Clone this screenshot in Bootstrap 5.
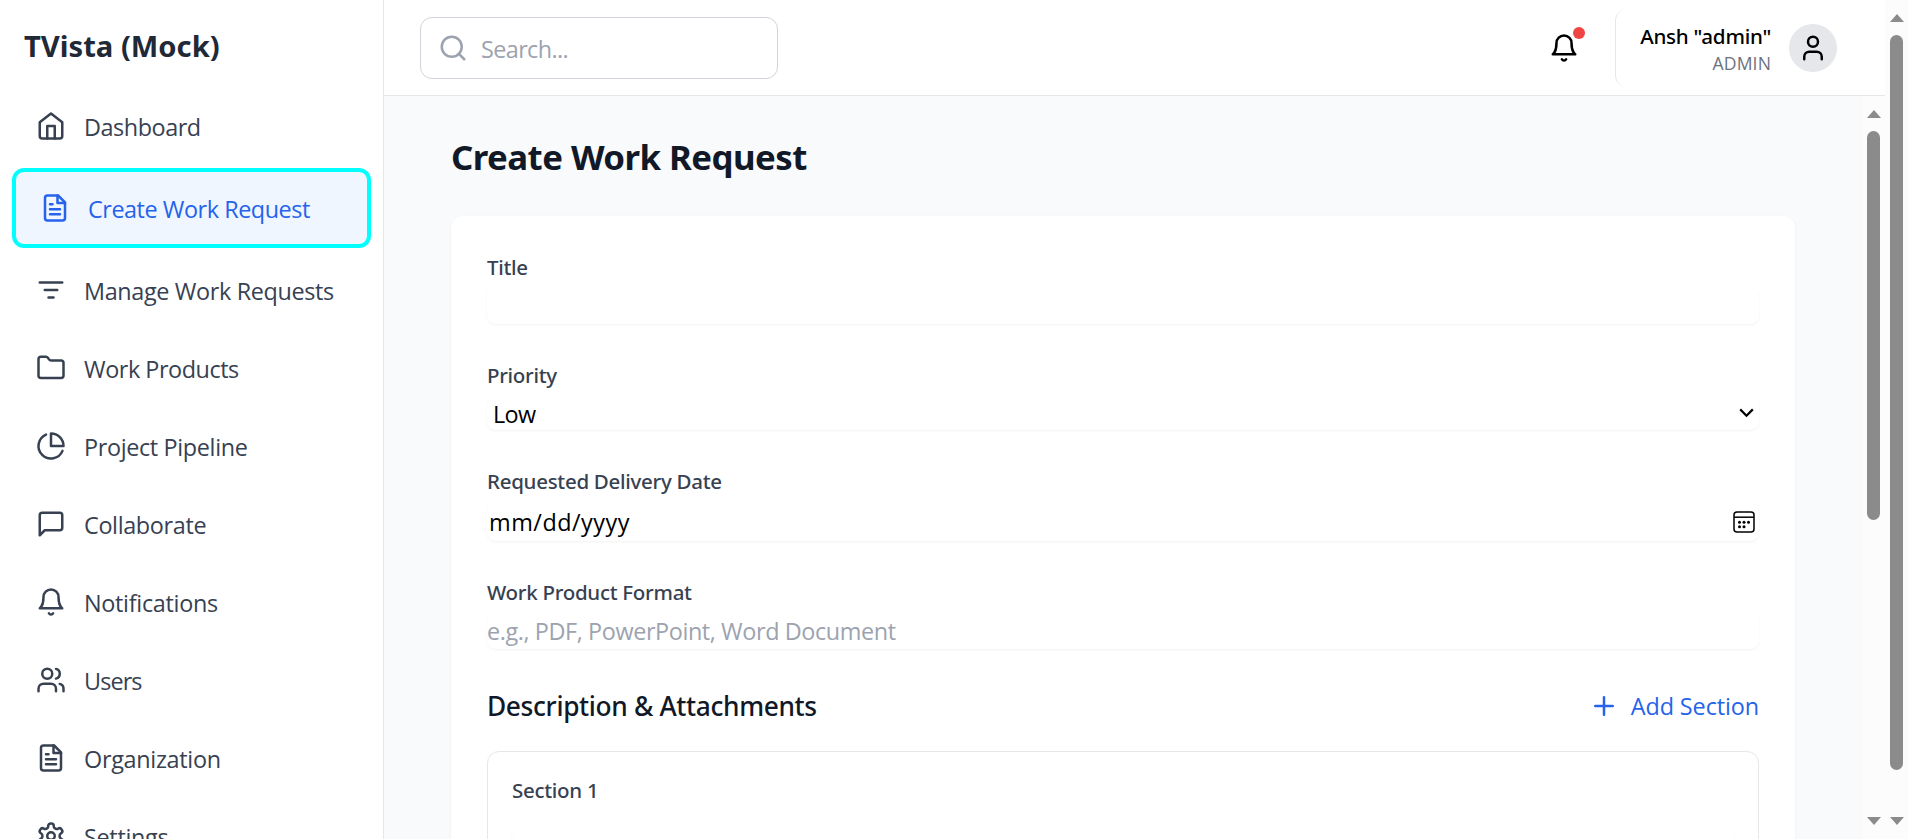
<!DOCTYPE html>
<html lang="en">
<head>
<meta charset="utf-8">
<meta name="viewport" content="width=device-width, initial-scale=1">
<title>TVista (Mock) - Create Work Request</title>
<link href="https://cdn.jsdelivr.net/npm/bootstrap@5.3.0/dist/css/bootstrap.min.css" rel="stylesheet">
<style>
  :root { --line: #e5e7eb; --ink: #111827; --slate: #374151; --muted: #9ca3af; --blue: #2563eb; }
  body { font: 400 23.4px/36px "Open Sans", "Noto Sans", sans-serif; color: #000; letter-spacing: -.35px; }
  .ico { width: 30px; height: 30px; flex: none; fill: none; stroke: currentColor; stroke-width: 2; stroke-linecap: round; stroke-linejoin: round; }
  .t2 { letter-spacing: -.3px; }
  .t4 { letter-spacing: -.45px; }
  .t5 { letter-spacing: -.6px; }
  .t8 { letter-spacing: -.9px; }

  .sidebar { width: 384px; border-right: 1px solid var(--line); }
  .brand { font: 700 29.2px/42px "Noto Sans", sans-serif; letter-spacing: 0; color: #1f2937; padding: 25px 24px 23px; }
  .side-nav { gap: 6px; padding: 0 12px; flex-wrap: nowrap; }
  .side-nav .nav-link { display: flex; align-items: center; gap: 18px; height: 72px; padding: 0 24px; border-radius: 12px; color: var(--slate); flex: none; white-space: nowrap; }
  .side-nav .nav-link span { padding-top: 1px; }
  .side-nav .nav-link.active { height: 80px; border: 4px solid #0ff; background: #eff6ff; color: var(--blue); }

  .topbar { height: 96px; border-bottom: 1px solid var(--line); padding: 0 48px 0 36px; }
  .search-box { width: 358px; height: 62px; border: 1px solid #d1d5db; border-radius: 12px; padding: 0 17px; gap: 13px; color: var(--muted); }
  .search-box span { padding-top: 2px; }
  .bell-dot { position: absolute; width: 12px; height: 12px; top: -6px; right: -6px; background: #ef4444; }
  .profile { height: 78px; border-left: 1px solid var(--line); border-radius: 12px; padding-left: 24px; margin-left: 36px; gap: 18px; }
  .profile-name { font: 500 20.6px/30px "Noto Sans", sans-serif; letter-spacing: -.25px; padding-top: 1px; }
  .profile-role { font-size: 17.6px; line-height: 24px; letter-spacing: .1px; color: #6b7280; }
  .avatar { width: 48px; height: 48px; background: var(--line); }

  .workspace { background: #f9fafb; padding: 34px 67px 0; }
  .page-title { font: 700 34.8px/54px "Noto Sans", sans-serif; letter-spacing: -.55px; color: var(--ink); margin-bottom: 32px; }
  .form-panel { background: #fff; border-radius: 12px 12px 0 0; padding: 36px; height: 700px; box-shadow: 0 1px 3px rgba(0,0,0,.06); }
  .field { margin-bottom: 36px; }
  .field-name { display: block; font: 500 20.5px/30px "Noto Sans", sans-serif; letter-spacing: -.28px; color: var(--slate); margin-bottom: 6px; }
  .plain-input { display: flex; align-items: center; justify-content: space-between; width: 100%; height: 36px; border: 0; border-radius: 9px; box-shadow: 0 1px 3px rgba(0,0,0,.055); padding: 0; background: #fff; outline: 0; letter-spacing: -.4px; color: #000; }
  .plain-input::placeholder { color: var(--muted); opacity: 1; }
  .select-h { height: 34px; padding: 0 5px 0 6px; letter-spacing: -.6px; }
  .select-h span { padding-top: 1px; }
  .date-h { height: 39px; padding: 0 4px 0 2px; letter-spacing: .5px; }
  .section-title { font: 500 26.3px/42px "Noto Sans", sans-serif; letter-spacing: -.35px; color: var(--ink); }
  .add-link { color: var(--blue); gap: 12px; letter-spacing: -.1px; text-decoration: none; }
  .section-box { border: 1px solid var(--line); border-radius: 12px; padding: 23px 24px; height: 200px; margin-top: 24px; }

  .scroller { width: 23px; background: #fcfcfc; padding: 14px 0; }
  .arrow-up, .arrow-down { width: 0; height: 0; border: 7.5px solid transparent; }
  .arrow-up { border-top: 0; border-bottom: 8px solid #8b8b8b; }
  .arrow-down { border-bottom: 0; border-top: 8px solid #8b8b8b; }
  .thumb { width: 13px; border-radius: 7px; background: #8b8b8b; margin-top: 13px; }
  .thumb-page { height: 735px; }
  .thumb-form { height: 389px; }
</style>
</head>
<body class="d-flex vh-100 overflow-hidden bg-white">

<aside class="sidebar d-flex flex-column flex-shrink-0 overflow-hidden">
  <div class="brand">TVista (Mock)</div>
  <nav class="side-nav nav flex-column">
    <a class="nav-link t4" href="#"><svg class="ico" viewBox="0 0 24 24"><path d="M3 9l9-7 9 7v11a2 2 0 0 1-2 2H5a2 2 0 0 1-2-2z"/><path d="M9 22V12h6v10"/></svg><span>Dashboard</span></a>
    <a class="nav-link t4 active" href="#"><svg class="ico" viewBox="0 0 24 24"><path d="M14.500 2H6a2 2 0 0 0-2 2v16a2 2 0 0 0 2 2h12a2 2 0 0 0 2-2V7.500z"/><path d="M14 2v6h6M16 13H8M16 17H8M10 9H8"/></svg><span>Create Work Request</span></a>
    <a class="nav-link" href="#"><svg class="ico" viewBox="0 0 24 24"><path d="M3 6h18M7 12h10M10 18h4"/></svg><span>Manage Work Requests</span></a>
    <a class="nav-link t4" href="#"><svg class="ico" viewBox="0 0 24 24"><path d="M4 20h16a2 2 0 0 0 2-2V8a2 2 0 0 0-2-2h-7.930a2 2 0 0 1-1.660-.9l-.82-1.200A2 2 0 0 0 7.930 3H4a2 2 0 0 0-2 2v13c0 1.100.9 2 2 2Z"/></svg><span>Work Products</span></a>
    <a class="nav-link" href="#"><svg class="ico" viewBox="0 0 24 24"><path d="M21.210 15.890A10 10 0 1 1 8 2.830"/><path d="M22 12A10 10 0 0 0 12 2v10z"/></svg><span>Project Pipeline</span></a>
    <a class="nav-link" href="#"><svg class="ico" viewBox="0 0 24 24"><path d="M21 15a2 2 0 0 1-2 2H7l-4 4V5a2 2 0 0 1 2-2h14a2 2 0 0 1 2 2z"/></svg><span>Collaborate</span></a>
    <a class="nav-link t2" href="#"><svg class="ico" viewBox="0 0 24 24"><path d="M6 8a6 6 0 0 1 12 0c0 7 3 9 3 9H3s3-2 3-9"/><path d="M10.300 21a1.940 1.940 0 0 0 3.400 0"/></svg><span>Notifications</span></a>
    <a class="nav-link t8" href="#"><svg class="ico" viewBox="0 0 24 24"><path d="M16 21v-2a4 4 0 0 0-4-4H6a4 4 0 0 0-4 4v2"/><circle cx="9" cy="7" r="4"/><path d="M22 21v-2a4 4 0 0 0-3-3.870M16 3.130a4 4 0 0 1 0 7.750"/></svg><span>Users</span></a>
    <a class="nav-link t2" href="#"><svg class="ico" viewBox="0 0 24 24"><path d="M14.500 2H6a2 2 0 0 0-2 2v16a2 2 0 0 0 2 2h12a2 2 0 0 0 2-2V7.500z"/><path d="M14 2v6h6M16 13H8M16 17H8M10 9H8"/></svg><span>Organization</span></a>
    <a class="nav-link t2" href="#"><svg class="ico" viewBox="0 0 24 24"><path d="M12.220 2h-.44a2 2 0 0 0-2 2v.18a2 2 0 0 1-1 1.730l-.43.25a2 2 0 0 1-2 0l-.15-.08a2 2 0 0 0-2.730.73l-.22.38a2 2 0 0 0 .73 2.730l.15.1a2 2 0 0 1 1 1.720v.51a2 2 0 0 1-1 1.740l-.15.09a2 2 0 0 0-.73 2.730l.22.38a2 2 0 0 0 2.730.73l.15-.08a2 2 0 0 1 2 0l.43.25a2 2 0 0 1 1 1.730V20a2 2 0 0 0 2 2h.44a2 2 0 0 0 2-2v-.18a2 2 0 0 1 1-1.730l.43-.25a2 2 0 0 1 2 0l.15.08a2 2 0 0 0 2.730-.73l.22-.39a2 2 0 0 0-.73-2.730l-.15-.08a2 2 0 0 1-1-1.740v-.5a2 2 0 0 1 1-1.740l.15-.09a2 2 0 0 0 .73-2.730l-.22-.38a2 2 0 0 0-2.730-.73l-.15.08a2 2 0 0 1-2 0l-.43-.25a2 2 0 0 1-1-1.730V4a2 2 0 0 0-2-2z"/><circle cx="12" cy="12" r="3"/></svg><span>Settings</span></a>
  </nav>
</aside>

<div class="d-flex flex-column flex-grow-1">
  <header class="topbar d-flex align-items-center justify-content-between flex-shrink-0">
    <div class="search-box d-flex align-items-center t5">
      <svg class="ico" viewBox="0 0 24 24"><circle cx="11" cy="11" r="8"/><path d="m21 21-4.300-4.300"/></svg>
      <span>Search...</span>
    </div>
    <div class="d-flex align-items-center">
      <div class="position-relative d-flex">
        <svg class="ico" viewBox="0 0 24 24"><path d="M6 8a6 6 0 0 1 12 0c0 7 3 9 3 9H3s3-2 3-9"/><path d="M10.300 21a1.940 1.940 0 0 0 3.400 0"/></svg>
        <span class="bell-dot rounded-circle"></span>
      </div>
      <div class="profile d-flex align-items-center">
        <div class="text-end">
          <div class="profile-name">Ansh "admin"</div>
          <div class="profile-role">ADMIN</div>
        </div>
        <div class="avatar rounded-circle d-flex align-items-center justify-content-center">
          <svg class="ico" viewBox="0 0 24 24"><path d="M19 21v-2a4 4 0 0 0-4-4H9a4 4 0 0 0-4 4v2"/><circle cx="12" cy="7" r="4"/></svg>
        </div>
      </div>
    </div>
  </header>

  <div class="d-flex flex-grow-1 overflow-hidden">
    <main class="workspace flex-grow-1 overflow-hidden">
      <h1 class="page-title">Create Work Request</h1>
      <form class="form-panel">
        <div class="field">
          <label class="field-name" for="title">Title</label>
          <input class="plain-input" id="title" type="text">
        </div>
        <div class="field">
          <span class="field-name">Priority</span>
          <div class="plain-input select-h" role="combobox"><span>Low</span>
            <svg width="15" height="10" viewBox="0 0 15 10" fill="none" stroke="#000" stroke-width="2.200"><path d="M1.200 1.400 7.500 7.700l6.300-6.300"/></svg>
          </div>
        </div>
        <div class="field">
          <span class="field-name">Requested Delivery Date</span>
          <div class="plain-input date-h"><span>mm/dd/yyyy</span>
            <svg width="22" height="22" viewBox="0 0 22 22"><rect x="1" y="1" width="20" height="20" rx="3" fill="none" stroke="#000" stroke-width="1.500"/><path d="M1 6.200h20" stroke="#000" stroke-width="1.500"/><g><circle cx="6.500" cy="11.300" r="1.500"/><circle cx="11" cy="11.300" r="1.500"/><circle cx="15.500" cy="11.300" r="1.500"/><circle cx="6.500" cy="15.700" r="1.500"/><circle cx="11" cy="15.700" r="1.500"/></g></svg>
          </div>
        </div>
        <div class="field">
          <label class="field-name" for="format">Work Product Format</label>
          <input class="plain-input" id="format" type="text" placeholder="e.g., PDF, PowerPoint, Word Document">
        </div>
        <div class="d-flex align-items-center justify-content-between">
          <div class="section-title">Description &amp; Attachments</div>
          <a class="add-link d-flex align-items-center" href="#"><svg class="ico" viewBox="0 0 24 24"><path d="M5 12h14M12 5v14"/></svg><span>Add Section</span></a>
        </div>
        <div class="section-box">
          <span class="field-name">Section 1</span>
          <div class="plain-input mt-4"></div>
        </div>
      </form>
    </main>
    <div class="scroller d-flex flex-column align-items-center flex-shrink-0">
      <div class="arrow-up"></div>
      <div class="thumb thumb-form"></div>
      <div class="arrow-down mt-auto"></div>
    </div>
  </div>
</div>

<div class="scroller d-flex flex-column align-items-center flex-shrink-0">
  <div class="arrow-up"></div>
  <div class="thumb thumb-page"></div>
  <div class="arrow-down mt-auto"></div>
</div>

<script src="https://cdn.jsdelivr.net/npm/bootstrap@5.3.0/dist/js/bootstrap.bundle.min.js"></script>
</body>
</html>
